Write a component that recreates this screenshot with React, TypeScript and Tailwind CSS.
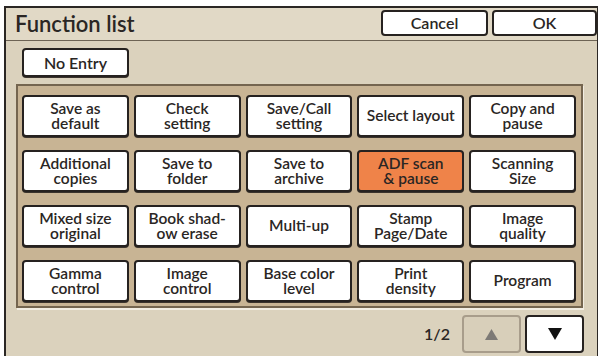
const items = [
  ['Save as', 'default'],
  ['Check', 'setting'],
  ['Save/Call', 'setting'],
  ['Select layout'],
  ['Copy and', 'pause'],
  ['Additional', 'copies'],
  ['Save to', 'folder'],
  ['Save to', 'archive'],
  ['ADF scan', '& pause'],
  ['Scanning', 'Size'],
  ['Mixed size', 'original'],
  ['Book shad-', 'ow erase'],
  ['Multi-up'],
  ['Stamp', 'Page/Date'],
  ['Image', 'quality'],
  ['Gamma', 'control'],
  ['Image', 'control'],
  ['Base color', 'level'],
  ['Print', 'density'],
  ['Program'],
];

const FuncButton = ({ lines, active }: { lines: string[]; active?: boolean }) => (
  <button
    className={
      'flex h-[42px] flex-col items-center justify-center rounded-[4px] border-2 border-[#262220] text-[15.5px] font-semibold leading-[15.5px] text-[#2a2624] shadow-[0_1px_0_#3a332c] ' +
      (active ? 'bg-[#ef8349]' : 'bg-white')
    }
  >
    {lines.map((l) => (
      <span key={l}>{l}</span>
    ))}
  </button>
);

export default function App() {
  return (
    <div
      className="h-[356px] w-[598px] overflow-hidden bg-white pl-[4px] pt-[6px]"
      style={{ fontFamily: 'Lato, "Open Sans", sans-serif' }}
    >
      <div className="flex h-[350px] w-[594px] flex-col border-l-2 border-r border-t-2 border-[#2b2724] bg-[#dbd2bd]">
        {/* header */}
        <div className="flex h-[33px] items-start border-b border-[#6d6354] bg-[#e1d9c6]">
          <div className="pl-[9px] pt-[3px] text-[22px] font-semibold leading-[26px] text-[#2a2624]">
            Function list
          </div>
          <div className="ml-auto mt-[2px] flex gap-[4px]">
            <button className="h-[26px] w-[107px] rounded-[4px] border-2 border-[#262220] bg-white text-[16px] font-semibold leading-none text-[#2a2624]">
              Cancel
            </button>
            <button className="h-[26px] w-[105px] rounded-[4px] border-2 border-[#262220] bg-white text-[16px] font-semibold leading-none text-[#2a2624]">
              OK
            </button>
          </div>
        </div>

        {/* body */}
        <div className="flex flex-1 flex-col">
          <button className="ml-[16px] mt-[7px] h-[29px] w-[107px] rounded-[4px] border-2 border-[#262220] bg-white text-[16px] font-semibold leading-none text-[#2a2624] shadow-[0_1px_0_#3a332c]">
            No Entry
          </button>

          <div className="ml-[10px] mt-[7px] h-[224px] w-[567px] border-2 border-[#74654f] bg-[#c8b494] pl-[4px] pr-[5px] pt-[9px] shadow-[1px_2px_0_#f2ede2]">
            <div className="grid grid-cols-5 gap-x-[5px] gap-y-[13px]">
              {items.map((lines, i) => (
                <FuncButton key={i} lines={lines} active={i === 8} />
              ))}
            </div>
          </div>

          <div className="mr-[13px] mt-[7px] flex items-center justify-end gap-[4px]">
            <span className="mr-[8px] text-[16px] font-semibold text-[#2a2624]">1/2</span>
            <button className="flex h-[38px] w-[59px] items-center justify-center rounded-[4px] border-2 border-[#a89d8b] bg-[#d8cfba]">
              <svg width="13" height="11" viewBox="0 0 13 11">
                <polygon points="6.5,0 13,11 0,11" fill="#7d7a76" />
              </svg>
            </button>
            <button className="flex h-[38px] w-[59px] items-center justify-center rounded-[4px] border-2 border-[#262220] bg-white">
              <svg width="14" height="12" viewBox="0 0 14 12">
                <polygon points="0,0 14,0 7,12" fill="#111" />
              </svg>
            </button>
          </div>
        </div>
      </div>
    </div>
  );
}
